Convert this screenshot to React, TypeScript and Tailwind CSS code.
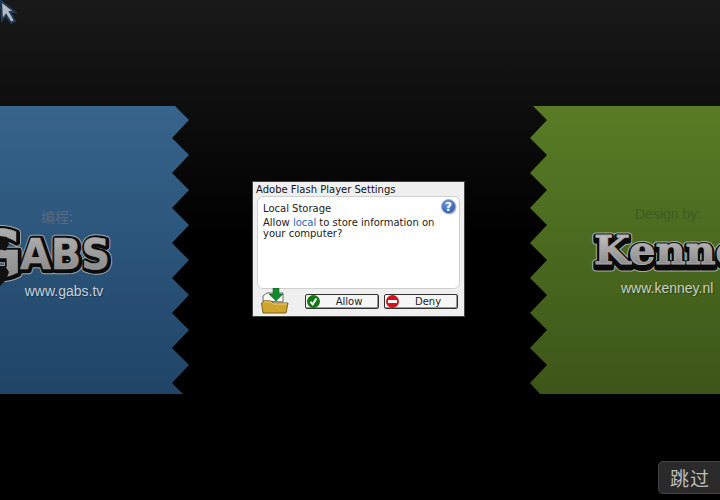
import React from "react";

function teeth(kind: "left" | "right") {
  const pts: string[] = [];
  if (kind === "left") {
    pts.push("0 0", "175px 0");
    for (let i = 0; i < 8; i++) {
      pts.push(`189px ${14 + i * 35}px`);
      if (i < 7) pts.push(`172px ${32 + i * 35}px`);
    }
    pts.push("172px 277px", "183px 288px", "0 288px");
  } else {
    pts.push("100% 0", "3px 0");
    for (let i = 0; i < 8; i++) {
      pts.push(`17px ${14 + i * 35}px`);
      if (i < 7) pts.push(`0px ${32 + i * 35}px`);
    }
    pts.push("0px 277px", "10px 288px", "100% 288px");
  }
  return `polygon(${pts.join(",")})`;
}

function GabsLogo() {
  const t = { fontFamily: "'DejaVu Sans', sans-serif", fontWeight: 700 } as const;
  const layers = (
    <>
      <text x="21" y="44" fontSize="43" textLength="90" lengthAdjust="spacingAndGlyphs" style={t}>ABS</text>
      <text x="-26" y="51" fontSize="64" textLength="49" lengthAdjust="spacingAndGlyphs" style={t}>G</text>
    </>
  );
  return (
    <svg width="189" height="55" viewBox="0 0 189 55" className="block overflow-visible">
      <defs>
        <linearGradient id="gabsFill" x1="0" y1="0" x2="0" y2="1">
          <stop offset="0" stopColor="#b4b4b4" />
          <stop offset="1" stopColor="#858585" />
        </linearGradient>
      </defs>
      <g fill="#a3a8ad" stroke="#a3a8ad" strokeWidth="8.5" strokeLinejoin="round">{layers}</g>
      <g fill="#0c0c0c" stroke="#0c0c0c" strokeWidth="6.5" strokeLinejoin="round">{layers}</g>
      <g fill="url(#gabsFill)" stroke="#a0a0a0" strokeWidth="0.5" transform="translate(-1 -1)">{layers}</g>
      <path d="M0 10 L7 11 L9 18 L5 25 L0 22 Z" fill="#111" />
      <path d="M0 42 L5 40 L9 46 L6 54 L0 60 Z" fill="#111" />
    </svg>
  );
}

function KenneyLogo() {
  const t = { fontFamily: "'DejaVu Serif', serif", fontWeight: 700 } as const;
  const layer = (
    <text x="6" y="41" fontSize="39" textLength="172" lengthAdjust="spacingAndGlyphs" style={t}>Kenney</text>
  );
  return (
    <svg width="190" height="54" viewBox="0 0 190 54" className="block overflow-visible">
      <defs>
        <linearGradient id="kenFill" x1="0" y1="0" x2="0" y2="1">
          <stop offset="0" stopColor="#cfcfcf" />
          <stop offset="1" stopColor="#7c7c7c" />
        </linearGradient>
      </defs>
      <g fill="#a7ad9f" stroke="#a7ad9f" strokeWidth="7" strokeLinejoin="round">{layer}</g>
      <g fill="#a7ad9f" stroke="#a7ad9f" strokeWidth="7" strokeLinejoin="round" transform="translate(0 3)">{layer}</g>
      <g fill="#0a0a0a" stroke="#0a0a0a" strokeWidth="5" strokeLinejoin="round">{layer}</g>
      <g fill="#0a0a0a" stroke="#0a0a0a" strokeWidth="5" strokeLinejoin="round" transform="translate(0 3)">{layer}</g>
      <g fill="url(#kenFill)" stroke="#a8a8a8" strokeWidth="1" transform="translate(0 -1)">{layer}</g>
    </svg>
  );
}

function FolderIcon() {
  return (
    <svg width="28" height="26" viewBox="0 0 28 26" className="block">
      <path d="M2 13 V8 L6 5 H22 V14 Z" fill="#fff" stroke="#666" strokeWidth="1" />
      <path d="M12 0 H18 V6 H22 L15 13 L8 6 H12 Z" fill="#118a2c" stroke="#0a5a1c" strokeWidth="0.5" />
      <path d="M3 13 H10 L12 15 H27 L25 25 H2 L0.5 15 Z" fill="#d0a52f" stroke="#7d6214" strokeWidth="1" />
      <path d="M3 14 H10 L12 16 H26" fill="none" stroke="#f0d063" strokeWidth="1" />
    </svg>
  );
}

function CheckIcon() {
  return (
    <svg width="13" height="13" viewBox="0 0 13 13" className="block">
      <circle cx="6.5" cy="6.5" r="6.5" fill="#0f7a12" />
      <path d="M3.5 6.8 L5.7 9.3 L9.4 3.5" fill="none" stroke="#fff" strokeWidth="2" />
    </svg>
  );
}

function DenyIcon() {
  return (
    <svg width="13" height="13" viewBox="0 0 13 13" className="block">
      <circle cx="6.5" cy="6.5" r="6.5" fill="#d5121c" />
      <rect x="2" y="5" width="9" height="3" fill="#fff" />
    </svg>
  );
}

function HelpIcon() {
  return (
    <svg width="16" height="16" viewBox="0 0 16 16" className="block">
      <defs>
        <radialGradient id="helpFill" cx="0.4" cy="0.3" r="0.8">
          <stop offset="0" stopColor="#6f9be0" />
          <stop offset="1" stopColor="#2452a8" />
        </radialGradient>
      </defs>
      <circle cx="8.5" cy="8.5" r="7" fill="#b8b8b8" />
      <circle cx="7.5" cy="7.5" r="7" fill="url(#helpFill)" stroke="#9fb0cc" strokeWidth="1" />
      <text x="7.5" y="12" textAnchor="middle" fontSize="12" fontWeight="700" fill="#fff" style={{ fontFamily: "'DejaVu Sans', sans-serif" }}>?</text>
    </svg>
  );
}

function FlashButton({ icon, label }: { icon: React.ReactNode; label: string }) {
  return (
    <div className="w-[74px] h-[15px] flex items-center pl-[1px] bg-[#f6f6f6] border border-[#333] rounded-[2px] shadow-[inset_-1px_-1px_0_#999]">
      {icon}
      <span className="flex-1 text-center text-[10px] leading-none text-[#222]">{label}</span>
    </div>
  );
}

export default function App() {
  return (
    <div className="relative w-[720px] h-[500px] overflow-hidden flex items-center justify-between bg-[linear-gradient(#191919,#000000_240px)]">
      {/* left panel */}
      <div
        style={{ clipPath: teeth("left") }}
        className="w-[189px] h-[288px] shrink-0 flex flex-col pt-[100px] bg-[linear-gradient(#37648c,#1f4466)]"
      >
        <div className="w-[114px] text-center text-sm leading-5 text-[#566a80] font-['Noto_Sans_CJK_SC',sans-serif]">编程:</div>
        <GabsLogo />
        <div className="w-[128px] text-center text-sm leading-5 text-[#c6ced8] [text-shadow:1px_1px_1px_#1a3550] font-['Liberation_Sans',sans-serif]">www.gabs.tv</div>
      </div>

      {/* dialog */}
      <div className="flex-1 flex justify-center pb-[2px] pr-[2px]">
        <div className="w-[213px] h-[136px] flex flex-col bg-[#efefef] border border-[#444] font-['DejaVu_Sans',sans-serif]">
          <div className="h-[14px] pl-[3px] pt-[1px] text-[10px] leading-[14px] text-[#111]">Adobe Flash Player Settings</div>
          <div className="h-[93px] mx-[4px] flex flex-col bg-white border border-[#cfcfcf] rounded-[6px] px-[5px] pt-[6px] text-[10px] leading-[11px] text-[#222]">
            <div className="flex justify-between items-start h-[14px]">
              <span>Local Storage</span>
              <span className="-mr-[3px] -mt-[4px]"><HelpIcon /></span>
            </div>
            <div className="w-[180px]">
              Allow <span className="text-[#1b6dbd]">local</span> to store information on your computer?
            </div>
          </div>
          <div className="flex-1 flex items-center pl-[8px] pr-[6px]">
            <span className="-mt-[3px]"><FolderIcon /></span>
            <div className="ml-[16px] flex gap-[5px] pb-[2px]">
              <FlashButton icon={<CheckIcon />} label="Allow" />
              <FlashButton icon={<DenyIcon />} label="Deny" />
            </div>
          </div>
        </div>
      </div>

      {/* right panel */}
      <div
        style={{ clipPath: teeth("right") }}
        className="w-[190px] h-[288px] shrink-0 flex flex-col pt-[98px] bg-[linear-gradient(#587c25,#3c5619)]"
      >
        <div className="pl-[105px] text-sm leading-5 text-[#405a20] font-['Liberation_Sans',sans-serif]">Design by:</div>
        <div className="pl-[58px]"><KenneyLogo /></div>
        <div className="pl-[91px] text-sm leading-5 text-[#c8cfc0] [text-shadow:1px_1px_1px_#2d4212] font-['Liberation_Sans',sans-serif] whitespace-nowrap">www.kenney.nl</div>
      </div>

      {/* cursor */}
      <svg width="20" height="26" viewBox="0 0 20 26" className="absolute -left-[1px] -top-[1px]">
        <path d="M2 2 L16 13 L11 13 L16 22 L12 24 L7 16 L3 21 Z" fill="#b5bbc6" stroke="#1d3a57" strokeWidth="2" />
      </svg>

      {/* skip */}
      <div className="absolute left-[658px] top-[461px] w-[70px] h-[33px] pl-[11px] rounded-[5px] bg-[#2a2a2a] border border-[#444] text-[19px] leading-[31px] tracking-[1px] text-[#bdbdbd] font-['Noto_Sans_CJK_SC',sans-serif]">跳过</div>
    </div>
  );
}
